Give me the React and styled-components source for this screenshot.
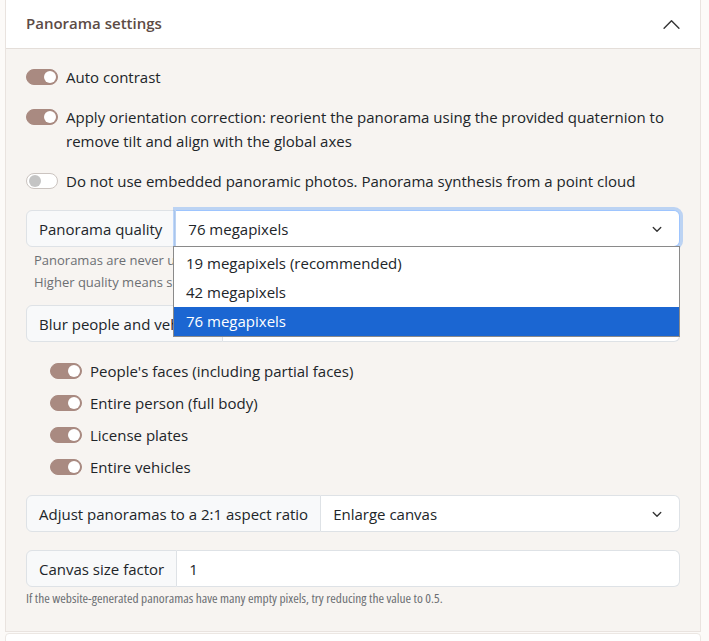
import styled, { createGlobalStyle } from "styled-components";

const GlobalStyle = createGlobalStyle`
  body {
    margin: 0;
    background: #fcfaf8;
    font-family: "Open Sans", "Noto Sans", sans-serif;
    color: #212529;
  }
`;

const qualityOptions = [
    "19 megapixels (recommended)",
    "42 megapixels",
    "76 megapixels",
];

const blurOptions = [
    "People's faces (including partial faces)",
    "Entire person (full body)",
    "License plates",
    "Entire vehicles",
];

const Page = styled.div`
  padding: 0 8px 0 5px;
  height: 641px;
  overflow: hidden;
`;

const Panel = styled.div`
  border: 1px solid #e9e3df;
  border-top: none;
  background: #f7f4f1;
`;

const Header = styled.div`
  height: 48px;
  display: flex;
  align-items: center;
  justify-content: space-between;
  padding: 0 20px;
  background: #fff;
  border-bottom: 1px solid #e4ded9;
  h2 {
    margin: 0 0 2px 0;
    font-size: 15px;
    font-weight: 600;
    color: #5d4b45;
  }
`;

const Body = styled.div`
  padding: 16px 20px 22px 20px;
`;

const ToggleRow = styled.label`
  display: flex;
  align-items: flex-start;
  gap: 8px;
  font-size: 15px;
  line-height: 24px;
  margin-bottom: ${p => p.$gap || 16}px;
  padding-left: ${p => p.$indent || 0}px;
`;

const Switch = styled.span`
  flex: none;
  position: relative;
  width: 32px;
  height: 16px;
  margin-top: 4px;
  border-radius: 8px;
  box-sizing: border-box;
  background: ${p => (p.$on ? "#a98a81" : "#fff")};
  border: 1px solid ${p => (p.$on ? "#a98a81" : "#cbc4c0")};
  &::after {
    content: "";
    position: absolute;
    top: 1px;
    left: ${p => (p.$on ? "17px" : "2px")};
    width: 12px;
    height: 12px;
    border-radius: 50%;
    background: ${p => (p.$on ? "#fff" : "#c4c4c4")};
  }
`;

const Group = styled.div`
  position: relative;
  display: flex;
  height: 37px;
  margin-top: ${p => p.$top || 0}px;
  font-size: 15px;
`;

const Addon = styled.div`
  display: flex;
  align-items: center;
  padding: 0 12px;
  background: #f8f9fa;
  border: 1px solid #dee2e6;
  border-radius: 6px 0 0 6px;
  white-space: nowrap;
`;

const Field = styled.div`
  flex: 1;
  display: flex;
  align-items: center;
  justify-content: space-between;
  padding: 0 16px 0 12px;
  background: #fff;
  border: 1px solid ${p => (p.$focus ? "#9ec5fe" : "#dee2e6")};
  border-left: none;
  border-radius: 0 6px 6px 0;
  box-shadow: ${p => (p.$focus ? "0 0 0 3px rgba(13, 110, 253, 0.25)" : "none")};
  margin-left: ${p => (p.$focus ? "1px" : "0")};
`;

const Help = styled.div`
  margin-top: 2px;
  padding-left: 8px;
  font-size: 13px;
  line-height: 22px;
  color: #6c6f73;
`;

const NarrowHelp = styled(Help)`
  margin-top: 0;
  padding-left: 0;
  font-size: 13.4px;
  font-stretch: 75%;
`;

const Listbox = styled.ul`
  position: absolute;
  top: 36px;
  left: 147px;
  right: 0;
  margin: 0;
  padding: 2px 0 0 0;
  list-style: none;
  background: #fff;
  border: 1px solid #8a8a8a;
  z-index: 2;
`;

const Option = styled.li`
  height: 29px;
  line-height: 29px;
  padding-left: 12px;
  font-size: 15px;
  background: ${p => (p.$selected ? "#1b66d2" : "#fff")};
  color: ${p => (p.$selected ? "#fff" : "#212529")};
`;

const SubList = styled.div`
  margin-top: 17px;
`;

const NextCard = styled.div`
  margin-top: 1px;
  height: 40px;
  background: #fff;
  border: 1px solid #ece7e3;
  border-radius: 4px 4px 0 0;
`;

function Chevron({ up, size = 12 }) {
    return (
        <svg width={size} height={size} viewBox="0 0 16 16" fill="none"
             stroke="#333" strokeWidth={up ? 1.3 : 1.8} strokeLinecap="round" strokeLinejoin="round">
            {up ? <path d="M1 11.5 8 4.5l7 7"/> : <path d="M3 6l5 5 5-5"/>}
        </svg>
    );
}

export default function App() {
    return (
        <>
            <GlobalStyle/>
            <Page>
                <Panel>
                    <Header>
                        <h2>Panorama settings</h2>
                        <Chevron up size={17}/>
                    </Header>
                    <Body>
                        <ToggleRow>
                            <Switch $on/>
                            <span>Auto contrast</span>
                        </ToggleRow>
                        <ToggleRow>
                            <Switch $on/>
                            <span>Apply orientation correction: reorient the panorama using the provided quaternion to remove tilt and align with the global axes</span>
                        </ToggleRow>
                        <ToggleRow $gap={17}>
                            <Switch/>
                            <span>Do not use embedded panoramic photos. Panorama synthesis from a point cloud</span>
                        </ToggleRow>

                        <Group>
                            <Addon>Panorama quality</Addon>
                            <Field $focus>
                                <span>76 megapixels</span>
                                <Chevron/>
                            </Field>
                            <Listbox>
                                {qualityOptions.map(o => (
                                    <Option key={o} $selected={o === "76 megapixels"}>{o}</Option>
                                ))}
                            </Listbox>
                        </Group>
                        <Help>
                            Panoramas are never upscaled beyond the resolution of the source photos.<br/>
                            Higher quality means sharper panoramas, but larger files and slower loading.
                        </Help>

                        <Group $top={12}>
                            <Addon>Blur people and vehicles</Addon>
                            <Field>
                                <span>Custom</span>
                                <Chevron/>
                            </Field>
                        </Group>
                        <SubList>
                            {blurOptions.map(o => (
                                <ToggleRow key={o} $indent={24} $gap={8}>
                                    <Switch $on/>
                                    <span>{o}</span>
                                </ToggleRow>
                            ))}
                        </SubList>

                        <Group $top={16}>
                            <Addon>Adjust panoramas to a 2:1 aspect ratio</Addon>
                            <Field>
                                <span>Enlarge canvas</span>
                                <Chevron/>
                            </Field>
                        </Group>
                        <Group $top={18}>
                            <Addon>Canvas size factor</Addon>
                            <Field>
                                <span>1</span>
                            </Field>
                        </Group>
                        <NarrowHelp>
                            If the website-generated panoramas have many empty pixels, try reducing the value to 0.5.
                        </NarrowHelp>
                    </Body>
                </Panel>
                <NextCard/>
            </Page>
        </>
    );
}
